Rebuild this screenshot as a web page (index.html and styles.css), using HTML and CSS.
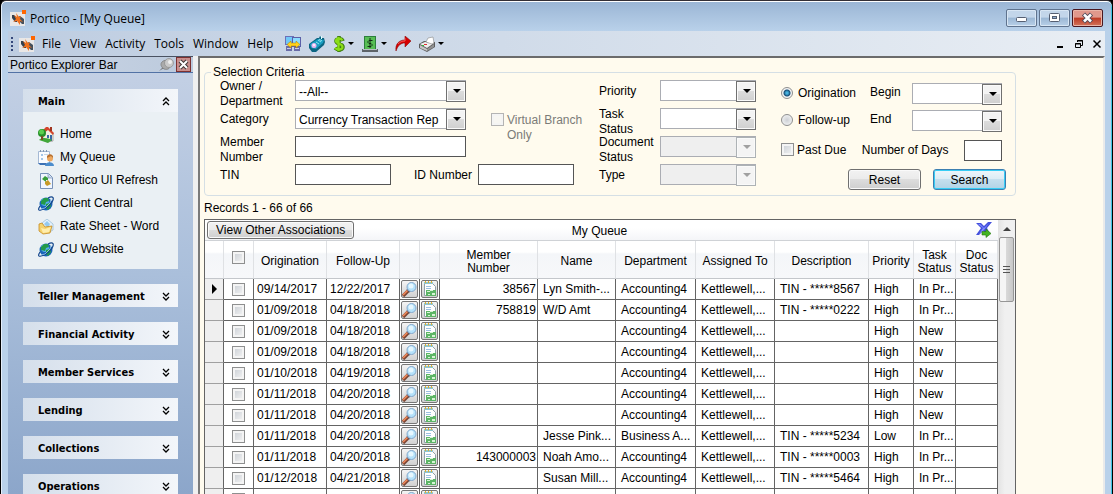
FILE: index.html
```html
<!DOCTYPE html>
<html lang="en">
<head>
	<meta charset="utf-8">
	<title>Portico - [My Queue]</title>
	<link rel="stylesheet" href="styles.css">
</head>
<body>
	<svg class="sprite" aria-hidden="true">
		<symbol id="logo" viewBox="0 0 16 16">
			<path d="M0 2h12v2h3v12H0z" fill="#e9e7e6"/>
			<path d="M12 0h4v4h-4z" fill="#f60"/>
			<path d="M2 5h2l3 3v4H5L2 8z" fill="#35414f"/>
			<path d="M8 7l2-1 4 3v5h-2l-3-3z" fill="#45505c"/>
			<path d="M6 3l3 4 2-1-1 3 3 3-3-1v4l-3-4-4 1 3-3-2-4 3 2z" fill="#f0701c"/>
		</symbol>
		<symbol id="computers" viewBox="0 0 16 16">
			<path d="M0 0h9v9H0z" fill="#6b70b8"/><path d="M1 1h7v7H1z" fill="#71c8f8"/>
			<path d="M7 1h9v10H7z" fill="#5b60a8"/><path d="M8 2h7v8H8z" fill="#8bdcff"/>
			<path d="M1 10h6v5H1zM9 11h6v4H9z" fill="#686ca8"/><path d="M2 12h4v1H2zM10 12h4v1h-4z" fill="#c9cbe8"/>
			<path d="M2 8.500L6 5v2h5V5l4 3.500-4 3.500v-2H6v2z" fill="#ffd21c" stroke="#a77a00" stroke-width=".5"/>
		</symbol>
		<symbol id="phone" viewBox="0 0 16 16">
			<path d="M0 8l8-6h2l1-2 2 2h2l1 4-1 3-8 7H3l-3-4z" fill="#0c6582"/>
			<path d="M1 8l8-5 6 1-1 3-7 6-5-1z" fill="#189dc0"/>
			<path d="M9 4l3 2M7 6l3 2M10 3l3 2" stroke="#8be4f4"/>
			<circle cx="5" cy="9.500" r="2.500" fill="#eab6f0"/><circle cx="5" cy="9" r="1" fill="#fff"/>
			<path d="M12 0h1v3h-1z" fill="#dff"/>
		</symbol>
		<symbol id="dollar" viewBox="0 0 12 16">
			<path d="M6 0v16M10 5C9 2 3 2 3 5c0 4 7 2 7 6 0 4-6 3-8 1" fill="none" stroke="#3f7d12" stroke-width="3.600"/>
			<path d="M5.500 1v14M9.500 4.500C8 2 3 2 3 5c0 3 6.500 2 6.500 6 0 3-5.500 3-7.500 1" fill="none" stroke="#8add16" stroke-width="2.200"/>
		</symbol>
		<symbol id="cash" viewBox="0 0 16 16">
			<path d="M2 0h12v14H2z" fill="#2c7f3c"/><path d="M3 1h10v12H3z" fill="#57bd55"/>
			<path d="M8 2v10M10.500 4.500H7L6 5.500v1l1 1h2l1 1v1l-1 1H5.500" fill="none" stroke="#102a14"/>
			<path d="M0 13h16v3H0z" fill="#5d6368"/><path d="M1 13h14v1H1z" fill="#b7bfc4"/>
		</symbol>
		<symbol id="forward" viewBox="0 0 16 16">
			<path d="M1 15C0 8 4 4 10 4V0l6 5-6 6V7C6 7 3 9 1 15z" fill="#d60000" stroke="#8c1010" stroke-width=".6"/>
			<path d="M3 8c2-2 4-3 7-3V2" fill="none" stroke="#ff6b6b" stroke-width=".8"/>
		</symbol>
		<symbol id="printer" viewBox="0 0 16 16">
			<path d="M0 8l5-3 11 1v5l-8 5-8-4z" fill="#5d5d5d"/>
			<path d="M1 8l5-2 9 1-7 5z" fill="#eee"/><path d="M1 9l7 4v2l-7-3z" fill="#c4c4c4"/><path d="M8 13l7-5v3l-7 4z" fill="#929292"/>
			<path d="M7 6l2-4 5-1 1 6-2 1z" fill="#fff" stroke="#888" stroke-width=".6"/>
			<path d="M5 8h3v1H5z" fill="#e03030"/><path d="M3 9h2v1H3z" fill="#36b53c"/>
		</symbol>
		<symbol id="pin" viewBox="0 0 16 14">
			<path d="M0 13l5-5 2 1z" fill="#777"/>
			<path d="M3 4c2-2 4-2 5-1l3 5c0 3-3 4-6 3-3-2-4-5-2-7z" fill="#aaa" stroke="#777" stroke-width=".7"/>
			<circle cx="10" cy="5" r="4.500" fill="#c9c9c9" stroke="#8d8d8d" stroke-width=".7"/><circle cx="11" cy="4" r="2" fill="#eee"/>
		</symbol>
		<symbol id="home" viewBox="0 0 16 16">
			<path d="M5 6l5-5 5 5v8l-6 1-4-2z" fill="#f3eee0" stroke="#84807b" stroke-width=".6"/>
			<path d="M5 3l3-3h2l6 6-1 2-5-5-4 3z" fill="#d4452c"/><path d="M12 0h2v4h-2z" fill="#a0341f"/>
			<path d="M9 8h2v3H9zM12 8h2v6h-2z" fill="#3767a5"/>
			<path d="M1 13c3-3 9-2 13 0l-4 3z" fill="#42a83a"/>
			<circle cx="4" cy="6" r="4" fill="#27902a"/><circle cx="3.500" cy="5" r="2.500" fill="#5cce4d"/>
			<path d="M3 9h2v4H3z" fill="#7d4f24"/>
		</symbol>
		<symbol id="queue" viewBox="0 0 16 16">
			<path d="M.500 1.500h11v12H.500z" fill="#fafcff" stroke="#a5b9d4"/>
			<path d="M2 0h1v2H2zM5 0h1v2H5zM8 0h1v2H8z" fill="#7f97b4"/>
			<path d="M3 4h2v2H3zM3 8h2v2H3z" fill="#a4c6e8"/><path d="M6 4h4v1H6z" fill="#c4d6e8"/>
			<path d="M0 13h8v2H2z" fill="#3c70b4"/>
			<path d="M7 16c0-5 9-5 9 0z" fill="#4b8ccc"/><circle cx="12" cy="8.500" r="3" fill="#eda860"/><path d="M9 8c-1-5 7-5 6 0l-2-2z" fill="#b8702f"/>
		</symbol>
		<symbol id="refresh" viewBox="0 0 16 16">
			<path d="M2.500.500h8l4 4v11h-12z" fill="#f0f6ff" stroke="#7892b8"/><path d="M10 1v4h4" fill="#c3d3e8" stroke="#7892b8" stroke-width=".7"/>
			<path d="M4 6l3-3 3 2v2H8v2z" fill="#389c3a"/><path d="M7 9l3-2 3 4-4 2-2-2z" fill="#c79a28"/>
		</symbol>
		<symbol id="globe" viewBox="0 0 16 16">
			<circle cx="8" cy="8" r="6.500" fill="#1864b8"/><circle cx="7" cy="6" r="4" fill="#54acec"/>
			<path d="M3 5l3-3h4l1 3-3 1-1 3-4-1zM8 8l4-1 1 3-3 4-2-2z" fill="#239a48"/>
			<path d="M10 2c4-2 6-1 5 2-1 4-7 9-12 10-3 1-3-1-1-4" fill="none" stroke="#14478d" stroke-width="1.200"/>
			<path d="M13 3l-1 4-5 5-4 1" fill="none" stroke="#b8e3ff" stroke-width=".7"/>
		</symbol>
		<symbol id="folder" viewBox="0 0 16 16">
			<path d="M4 4l5-4 6 5v6l-5 3z" fill="#e1f1fd" stroke="#94b7d2" stroke-width=".7"/>
			<path d="M6 5l3-3 3 3-2 4z" fill="#94c9ee"/>
			<path d="M1 5l3-1 3 4 7-1-2 7-7 1-4-3z" fill="#f5d26c" stroke="#c58b25" stroke-width=".8"/>
			<path d="M3 9l4 1 6-2-2 5-6 1z" fill="#ffedac"/>
		</symbol>
		<symbol id="chevron" viewBox="0 0 8 9">
			<path d="M1 1l3 3 3-3M1 5l3 3 3-3" fill="none" stroke="#000" stroke-width="1.300"/>
		</symbol>
		<symbol id="magnifier" viewBox="0 0 15 16">
			<path d="M1 15l6-6" stroke="#7d4634" stroke-width="3.400"/><path d="M1 14l5-5" stroke="#f1895a" stroke-width="1.600"/>
			<path d="M5 8l3 3" stroke="#555e74" stroke-width="1.500"/>
			<circle cx="9.500" cy="6" r="4.500" fill="#b5e2fb" stroke="#85a8cb"/><circle cx="9" cy="5" r="2.500" fill="#e6f7ff"/>
		</symbol>
		<symbol id="sheet" viewBox="0 0 15 16">
			<path d="M2.500 2.500h8l3 3v9h-11z" fill="#fff" stroke="#90a0a8"/>
			<path d="M2 1h9v2H2z" fill="#8fc4cf"/><path d="M3 0h1v2H3zM6 0h1v2H6zM9 0h1v2H9z" fill="#e0b030"/>
			<path d="M4 5.500h5M4 7.500h5" stroke="#9bbfe0"/>
			<path d="M4 9h10v6H4z" fill="#5db566"/><path d="M5 10h3v1H5zM10 12h3v2h-3zM6 13h2v1H6zM8 9h3v1H8z" fill="#d7f4d5"/>
		</symbol>
		<symbol id="export" viewBox="0 0 16 16">
			<path d="M0 1h5l3 3 4-4h4l-5 6 3 6h-4l-3-3-4 4H0l5-7z" fill="#4450dc"/><path d="M2 2h2l4 4 5-5-5 7-5 4 4-6z" fill="#7f8bff"/>
			<path d="M6 9.500h4V7l5 4.500-5 4V13H6z" fill="#44b322" stroke="#26760f" stroke-width=".6"/>
		</symbol>
	</svg>

	<div class="window">
		<header class="titlebar">
			<svg class="icon"><use href="#logo"/></svg>
			<h1>Portico - [My Queue]</h1>
			<div class="caption-buttons">
				<button type="button" aria-label="Minimize"><svg viewBox="0 0 29 16"><rect x="9.500" y="7.500" width="10" height="4" rx="1" fill="#fff" stroke="#555f72"/></svg></button>
				<button type="button" aria-label="Restore"><svg viewBox="0 0 29 16"><rect x="9.500" y="3.500" width="10" height="8" rx="1" fill="#fff" stroke="#555f72"/><rect x="12.500" y="6.500" width="4" height="2" fill="#8faed0" stroke="#555f72"/></svg></button>
				<button type="button" class="close" aria-label="Close"><svg viewBox="0 0 29 16"><path d="M10.500 4l8 8M18.500 4l-8 8" stroke="#514a58" stroke-width="4.500"/><path d="M11 4.500l7 7M18 4.500l-7 7" stroke="#fff" stroke-width="2.500"/></svg></button>
			</div>
		</header>

		<nav class="menubar">
			<span class="grip"></span>
			<svg class="icon menu-logo"><use href="#logo"/></svg>
			<div class="menus">
				<a href="#">File</a>
				<a href="#">View</a>
				<a href="#">Activity</a>
				<a href="#">Tools</a>
				<a href="#">Window</a>
				<a href="#">Help</a>
			</div>
			<div class="tools">
				<button type="button" aria-label="Connect"><svg class="icon"><use href="#computers"/></svg></button>
				<button type="button" aria-label="Phone"><svg class="icon"><use href="#phone"/></svg></button>
				<button type="button" class="drop" aria-label="Money"><svg class="icon narrow"><use href="#dollar"/></svg></button>
				<button type="button" class="drop" aria-label="Cash"><svg class="icon"><use href="#cash"/></svg></button>
				<button type="button" aria-label="Forward"><svg class="icon"><use href="#forward"/></svg></button>
				<button type="button" class="drop" aria-label="Print"><svg class="icon"><use href="#printer"/></svg></button>
			</div>
			<div class="mdi-buttons">
				<button type="button" aria-label="Minimize queue"><svg viewBox="0 0 10 10"><path d="M1 8h6" stroke="#000" stroke-width="2"/></svg></button>
				<button type="button" aria-label="Restore queue"><svg viewBox="0 0 10 10"><path d="M3.500 3V1.500h5v5H7M3 2h6M1.500 4.500h5v4h-5zM1 5h6" fill="none" stroke="#000"/></svg></button>
				<button type="button" aria-label="Close queue"><svg viewBox="0 0 10 10"><path d="M1.500 1.500l7 7M8.500 1.500l-7 7" stroke="#000" stroke-width="1.500"/></svg></button>
			</div>
		</nav>

		<div class="workspace">
			<aside class="sidebar">
				<div class="sidebar-title">
					<h2>Portico Explorer Bar</h2>
					<svg class="pin"><use href="#pin"/></svg>
					<button type="button" aria-label="Close explorer bar"><svg viewBox="0 0 13 13"><path d="M3 3l7 7M10 3l-7 7" stroke="#403838" stroke-width="4"/><path d="M3 3l7 7M10 3l-7 7" stroke="#fff" stroke-width="2"/></svg></button>
				</div>
				<section class="group">
					<h3>Main <svg class="chevron up"><use href="#chevron"/></svg></h3>
					<ul>
						<li><a href="#"><svg class="icon"><use href="#home"/></svg>Home</a></li>
						<li><a href="#"><svg class="icon"><use href="#queue"/></svg>My Queue</a></li>
						<li><a href="#"><svg class="icon"><use href="#refresh"/></svg>Portico UI Refresh</a></li>
						<li><a href="#"><svg class="icon"><use href="#globe"/></svg>Client Central</a></li>
						<li><a href="#"><svg class="icon"><use href="#folder"/></svg>Rate Sheet - Word</a></li>
						<li><a href="#"><svg class="icon"><use href="#globe"/></svg>CU Website</a></li>
					</ul>
				</section>
				<section class="group"><h3>Teller Management <svg class="chevron"><use href="#chevron"/></svg></h3></section>
				<section class="group"><h3>Financial Activity <svg class="chevron"><use href="#chevron"/></svg></h3></section>
				<section class="group"><h3>Member Services <svg class="chevron"><use href="#chevron"/></svg></h3></section>
				<section class="group"><h3>Lending <svg class="chevron"><use href="#chevron"/></svg></h3></section>
				<section class="group"><h3>Collections <svg class="chevron"><use href="#chevron"/></svg></h3></section>
				<section class="group"><h3>Operations <svg class="chevron"><use href="#chevron"/></svg></h3></section>
			</aside>

			<main class="content">
				<form>
					<fieldset>
						<legend>Selection Criteria</legend>
						<div class="criteria">
							<div class="fields owner-fields">
								<label class="two-line" for="owner">Owner / Department</label>
								<div class="combo wide"><select id="owner"><option>--All--</option></select></div>
								<label for="category">Category</label>
								<div class="field-row">
									<div class="combo wide"><select id="category"><option>Currency Transaction Rep</option></select></div>
									<label class="check disabled"><input type="checkbox" disabled>Virtual Branch Only</label>
								</div>
								<label class="two-line" for="member">Member Number</label>
								<input class="wide" type="text" id="member">
								<label for="tin">TIN</label>
								<div class="field-row">
									<input type="text" id="tin">
									<label class="id-label" for="idnumber">ID Number</label>
									<input type="text" id="idnumber">
								</div>
							</div>

							<div class="fields status-fields">
								<label for="priority">Priority</label>
								<div class="combo"><select id="priority"></select></div>
								<label class="two-line" for="task">Task<br>Status</label>
								<div class="combo"><select id="task"></select></div>
								<label class="two-line" for="document">Document Status</label>
								<div class="combo off"><select id="document" disabled></select></div>
								<label for="type">Type</label>
								<div class="combo off"><select id="type" disabled></select></div>
							</div>

							<div class="dates">
								<div class="date-row">
									<label class="check"><input type="radio" name="date" checked>Origination</label>
									<label for="begin">Begin</label>
									<div class="combo"><select id="begin"></select></div>
								</div>
								<div class="date-row">
									<label class="check"><input type="radio" name="date">Follow-up</label>
									<label for="end">End</label>
									<div class="combo"><select id="end"></select></div>
								</div>
								<div class="due-row">
									<label class="check"><input type="checkbox">Past Due</label>
									<label for="days">Number of Days</label>
									<input type="text" id="days">
								</div>
								<div class="actions">
									<button type="reset" class="btn">Reset</button>
									<button type="button" class="btn default">Search</button>
								</div>
							</div>
						</div>
					</fieldset>
				</form>

				<p class="records">Records 1 - 66 of 66</p>

				<div class="grid-panel">
					<div class="grid-main">
						<div class="grid-toolbar">
							<button type="button" class="btn">View Other Associations</button>
							<h2>My Queue</h2>
							<button type="button" class="export" aria-label="Export"><svg class="icon"><use href="#export"/></svg></button>
						</div>
						<table>
							<colgroup>
								<col class="c-marker"><col class="c-check"><col class="c-date"><col class="c-date">
								<col class="c-icon"><col class="c-icon"><col class="c-member"><col class="c-name">
								<col class="c-dept"><col class="c-assigned"><col><col class="c-priority">
								<col class="c-status"><col class="c-status">
							</colgroup>
							<thead>
								<tr>
									<th></th>
									<th><input type="checkbox" class="select-all" aria-label="Select all"></th>
									<th>Origination</th>
									<th>Follow-Up</th>
									<th></th>
									<th></th>
									<th>Member<br>Number</th>
									<th>Name</th>
									<th>Department</th>
									<th>Assigned To</th>
									<th>Description</th>
									<th>Priority</th>
									<th>Task<br>Status</th>
									<th>Doc<br>Status</th>
								</tr>
							</thead>
							<tbody id="rows"></tbody>
						</table>
					</div>
					<div class="scrollbar">
						<span class="scroll-up"></span>
						<span class="thumb"></span>
					</div>
				</div>
			</main>
		</div>
	</div>

	<script>
		const tasks = [
			['09/14/2017', '12/22/2017', '38567', 'Lyn Smith-...', 'Accounting4', 'TIN - *****8567', 'High', 'In Pr...'],
			['01/09/2018', '04/18/2018', '758819', 'W/D Amt', 'Accounting4', 'TIN - *****0222', 'High', 'In Pr...'],
			['01/09/2018', '04/18/2018', '', '', 'Accounting4', '', 'High', 'New'],
			['01/09/2018', '04/18/2018', '', '', 'Accounting4', '', 'High', 'New'],
			['01/10/2018', '04/19/2018', '', '', 'Accounting4', '', 'High', 'New'],
			['01/11/2018', '04/20/2018', '', '', 'Accounting4', '', 'High', 'New'],
			['01/11/2018', '04/20/2018', '', '', 'Accounting4', '', 'High', 'New'],
			['01/11/2018', '04/20/2018', '', 'Jesse Pink...', 'Business A...', 'TIN - *****5234', 'Low', 'In Pr...'],
			['01/11/2018', '04/20/2018', '143000003', 'Noah Amo...', 'Accounting4', 'TIN - *****0003', 'High', 'In Pr...'],
			['01/12/2018', '04/21/2018', '', 'Susan Mill...', 'Accounting4', 'TIN - *****5464', 'High', 'In Pr...'],
			['', '', '', '', '', '', '', '']
		];

		document.getElementById('rows').innerHTML = tasks.map(([orig, follow, member, name, dept, desc, priority, status], i) => `
			<tr>
				<td class="marker">${i === 0 ? '<span class="current"></span>' : ''}</td>
				<td class="center"><input type="checkbox" aria-label="Select row ${i + 1}"></td>
				<td class="date">${orig}</td>
				<td class="date">${follow}</td>
				<td class="tool"><button type="button" aria-label="View"><svg><use href="#magnifier"/></svg></button></td>
				<td class="tool"><button type="button" aria-label="Report"><svg><use href="#sheet"/></svg></button></td>
				<td class="number">${member}</td>
				<td>${name}</td>
				<td>${dept}</td>
				<td>${dept ? 'Kettlewell,...' : ''}</td>
				<td>${desc}</td>
				<td>${priority}</td>
				<td>${status}</td>
				<td></td>
			</tr>`).join('');
	</script>
</body>
</html>
```
FILE: styles.css
```css
* {
	box-sizing: border-box;
}

body {
	margin: 0;
	font-family: "Liberation Sans", Arial, sans-serif;
	font-size: 12px;
	line-height: 15px;
	color: #000;
	background: #000;
}

h1, h2, h3, p, ul {
	margin: 0;
	padding: 0;
	font-size: 12px;
	font-weight: normal;
}

a {
	color: inherit;
	text-decoration: none;
}

button, input, select {
	margin: 0;
	padding: 0;
	font: inherit;
	color: inherit;
}

button {
	border: 0;
	background: none;
}

svg {
	display: block;
}

.sprite {
	display: none;
}

.icon {
	flex: none;
	width: 16px;
	height: 16px;
}

.icon.narrow {
	width: 12px;
}

/* window frame */
.window {
	display: flex;
	flex-direction: column;
	height: 100vh;
	overflow: hidden;
	border-top: 1px solid #332f35;
	border-left: 1px solid #000;
	border-right: 1px solid #000;
	border-radius: 6px 6px 0 0;
	padding: 0 7px;
	background: linear-gradient(#9ab5d4, #b9d1ea 30px, #b9d1ea);
	box-shadow: inset 0 1px #fff, inset -1px 0 #3fc4e4, inset 1px 0 #e4eefa;
}

.titlebar {
	display: flex;
	flex: none;
	align-items: center;
	height: 30px;
	padding: 4px 2px 0;
}

.titlebar h1 {
	flex: 1;
	margin-left: 4px;
}

.titlebar h1, .menus {
	font-family: "Open Sans", "Noto Sans", sans-serif;
	font-size: 12px;
}

.caption-buttons {
	display: flex;
	gap: 2px;
}

.caption-buttons button {
	width: 31px;
	height: 18px;
	border: 1px solid #5f738e;
	border-radius: 2px;
	background: linear-gradient(#c3d6ea 45%, #9bb7d4 50%, #b8d0e8);
	box-shadow: inset 0 0 0 1px #d8e6f4;
}

.caption-buttons .close {
	border-color: #4a1720;
	background: linear-gradient(#e0988c 45%, #bd3a24 50%, #d3745b);
	box-shadow: inset 0 0 0 1px #eab5a8;
}

/* menu bar */
.menubar {
	display: flex;
	flex: none;
	align-items: center;
	height: 25px;
	padding-left: 3px;
	background: linear-gradient(90deg, #becde1, #d0dbe9 45%, #e9eef4);
}

.grip {
	width: 2px;
	height: 14px;
	background: repeating-linear-gradient(#34477a 0 2px, transparent 2px 4px);
}

.menu-logo {
	margin: 0 7px 0 6px;
}

.menus {
	display: flex;
	gap: 9px;
}

.tools {
	display: flex;
	align-items: center;
	gap: 8px;
	margin-left: 12px;
}

.tools button {
	display: flex;
	align-items: center;
}

.drop::after {
	content: "";
	margin-left: 3px;
	border: 3px solid transparent;
	border-top-color: #000;
	border-bottom: 0;
}

.mdi-buttons {
	display: flex;
	gap: 8px;
	margin-left: auto;
	padding-right: 3px;
}

.mdi-buttons svg {
	width: 10px;
	height: 10px;
}

.workspace {
	display: flex;
	flex: 1;
	min-height: 0;
	background: #f0f0f0;
}

/* explorer bar */
.sidebar {
	flex: none;
	width: 185px;
	overflow: hidden;
	background: linear-gradient(#c5d1e5, #aabfdb 50%, #8ca6ca);
}

.sidebar-title {
	display: flex;
	align-items: center;
	height: 17px;
	margin-bottom: 16px;
	padding: 0 2px;
	border-top: 1px solid #4a5262;
	border-bottom: 1px solid #5272a5;
	background: linear-gradient(90deg, #cbd6e5, #bccadd);
}

.sidebar-title h2 {
	flex: 1;
	padding-top: 1px;
}

.pin {
	width: 16px;
	height: 14px;
}

.sidebar-title button {
	width: 15px;
	height: 15px;
	margin-left: 1px;
	border: 1px solid #7c3030;
	background: #c98e8c;
}

.group {
	margin: 0 15px 15px;
	background: #eaf0f4;
}

.group h3 {
	display: flex;
	align-items: center;
	justify-content: space-between;
	height: 23px;
	padding: 1px 8px 0 15px;
	font: bold 11px "DejaVu Sans Condensed", "Open Sans", sans-serif;
	background: linear-gradient(90deg, #d5dfeb, #f3f6fa);
}

.chevron {
	width: 8px;
	height: 9px;
}

.chevron.up {
	transform: rotate(180deg);
}

.group ul {
	padding: 11px 0 8px 15px;
	list-style: none;
}

.group li a {
	display: flex;
	align-items: center;
	gap: 6px;
	height: 23px;
}

/* queue page */
.content {
	display: flex;
	flex: 1;
	flex-direction: column;
	min-width: 0;
	margin-left: 5px;
	padding: 7px 87px 0 4px;
	overflow: hidden;
	border-top: 2px solid #6b6b6b;
	border-left: 2px solid #7a7a7a;
	border-right: 2px solid #eaeaea;
	background: #fffbee;
}

fieldset {
	min-width: 0;
	height: 131px;
	margin: 0;
	padding: 0 9px 0 15px;
	border: 1px solid #d5dfe5;
	border-radius: 4px;
}

legend {
	margin-left: -9px;
	padding: 0 2px;
}

.criteria {
	display: flex;
	justify-content: space-between;
}

.fields {
	display: grid;
	grid-auto-rows: 28px;
	align-items: start;
}

.fields > label {
	padding-top: 4px;
}

.fields > .two-line {
	margin-top: -1px;
	padding-top: 0;
}

.owner-fields {
	grid-template-columns: 75px 279px;
}

.status-fields {
	grid-template-columns: 61px 96px;
}

.field-row {
	display: flex;
	align-items: flex-start;
}

input[type="text"] {
	width: 96px;
	height: 21px;
	border: 1px solid #555;
	background: #fff;
}

.wide, input[type="text"].wide {
	flex: none;
	width: 171px;
}

.id-label {
	flex: 1;
	padding: 4px 6px 0 0;
	text-align: right;
}

.check {
	display: flex;
	gap: 3px;
}

.check.disabled {
	flex: none;
	width: 110px;
	margin: 5px 0 0 25px;
	color: #7b7b78;
}

input[type="checkbox"] {
	flex: none;
	appearance: none;
	width: 13px;
	height: 13px;
	border: 1px solid #8e8f8f;
	background: linear-gradient(135deg, #c8cdd3, #f6f6f6);
	box-shadow: inset 0 0 0 2px #f4f4f4;
}

input[type="checkbox"]:disabled {
	border-color: #b4b4b4;
	background: #f7f6f2;
}

input[type="radio"] {
	flex: none;
	appearance: none;
	width: 12px;
	height: 12px;
	margin: 1px 2px 0 0;
	border: 1px solid #8e8f8f;
	border-radius: 50%;
	background: radial-gradient(#cdd0d5, #fafafa);
}

input[type="radio"]:checked {
	background: radial-gradient(#45b2df 0 1px, #174f78 3px, #f4f4f4 4px);
}

.combo {
	position: relative;
	height: 21px;
}

.combo select {
	display: block;
	appearance: none;
	width: 100%;
	height: 21px;
	padding: 3px 20px 0 3px;
	border: 1px solid #abadb3;
	border-radius: 0;
	background: #fff;
}

/* arrow button drawn over the select */
.combo::before {
	content: "";
	position: absolute;
	top: 1px;
	right: 0;
	width: 18px;
	height: 19px;
	border: 1px solid #707070;
	background: linear-gradient(#f3f3f3 45%, #dcdcdc 50%, #cfcfcf);
	box-shadow: inset 0 0 0 1px #fafafa;
	pointer-events: none;
}

.combo::after {
	content: "";
	position: absolute;
	top: 9px;
	right: 5px;
	border: 4px solid transparent;
	border-top-color: #000;
	border-bottom: 0;
	pointer-events: none;
}

.combo.off select {
	background: #efefef;
	opacity: 1;
}

.combo.off::before {
	border-color: #adb2b5;
	background: #f4f4f4;
}

.combo.off::after {
	border-top-color: #a0a0a0;
}

.dates {
	width: 225px;
	padding-top: 3px;
}

.date-row {
	display: grid;
	grid-template-columns: 89px 42px 90px;
	height: 27px;
}

.date-row label {
	padding-top: 2px;
}

.date-row .check {
	padding-top: 3px;
}

.due-row {
	display: flex;
	justify-content: space-between;
	align-items: center;
	width: 221px;
	height: 27px;
}

.due-row input[type="text"] {
	width: 38px;
}

.actions {
	display: flex;
	justify-content: flex-end;
	gap: 12px;
	margin-top: 5px;
}

.btn {
	height: 21px;
	border: 1px solid #707070;
	border-radius: 3px;
	background: linear-gradient(#f2f2f2, #ebebeb 48%, #dddddd 50%, #cfcfcf);
	box-shadow: inset 0 0 0 1px #fafafa;
}

.actions .btn {
	width: 73px;
	padding-top: 2px;
}

.btn.default {
	border-color: #3c7fb1;
	background: linear-gradient(#eef6fb, #dcecf5 48%, #c5dfee 50%, #b2d3e6);
	box-shadow: inset 0 0 0 1px #38cdf5;
}

.records {
	margin: 5px 0 3px;
}

/* results grid */
.grid-panel {
	display: flex;
	flex: 1;
	min-height: 0;
	overflow: hidden;
	border: 1px solid #646464;
	border-bottom: 0;
	background: #fff;
}

.grid-main {
	flex: 1;
	min-width: 0;
}

.grid-toolbar {
	display: grid;
	grid-template-columns: 1fr auto 1fr;
	align-items: center;
	height: 21px;
	padding: 0 6px 0 2px;
	border-bottom: 1px solid #cfd2d6;
	background: linear-gradient(#fff 40%, #f4f5f8);
}

.grid-toolbar h2 {
	padding-top: 2px;
}

.grid-toolbar .btn {
	justify-self: start;
	height: 18px;
	padding: 0 8px;
}

.export {
	justify-self: end;
}

table {
	width: 100%;
	table-layout: fixed;
	border-collapse: separate;
	border-spacing: 0;
}

.c-marker { width: 19px; }
.c-check { width: 30px; }
.c-date { width: 73px; }
.c-icon { width: 20px; }
.c-member { width: 98px; }
.c-name { width: 78px; }
.c-dept { width: 80px; }
.c-assigned { width: 79px; }
.c-priority { width: 45px; }
.c-status { width: 42px; }

th {
	height: 38px;
	padding: 4px 0 0;
	border-right: 1px solid #dfe1e4;
	border-bottom: 1px solid #c4c7cb;
	font-weight: normal;
	line-height: 13px;
	white-space: nowrap;
	background: linear-gradient(#fff 30%, #f4f6f9 35%, #f7f8fa);
}

th input {
	display: block;
	margin: -8px auto 0;
}

td {
	height: 21px;
	padding: 0 5px;
	border-right: 1px solid #646464;
	border-bottom: 1px solid #646464;
	white-space: nowrap;
	overflow: hidden;
}

td.marker {
	border-bottom-color: #a0a0a0;
	background: #efefef;
}

.current {
	display: block;
	width: 0;
	margin-left: 2px;
	border: 5px solid transparent;
	border-left-color: #000;
	border-right: 0;
}

td.center {
	padding: 0 8px;
}

td.center input {
	display: block;
}

td.date {
	padding: 0 3px;
}

td.number {
	padding-right: 1px;
	text-align: right;
}

td.tool {
	padding: 0 1px;
}

.tool button {
	display: block;
	width: 17px;
	height: 18px;
	border: 1px solid #777;
	border-radius: 2px;
	background: linear-gradient(#f4f4f4, #d2d2d2);
}

.tool svg {
	width: 15px;
	height: 16px;
}

.scrollbar {
	display: flex;
	flex: none;
	flex-direction: column;
	align-items: center;
	width: 17px;
	background: linear-gradient(90deg, #e3e3e3, #f0f0f0 40%);
}

.scroll-up {
	margin: 7px 0 6px;
	border: 4px solid transparent;
	border-top: 0;
	border-bottom: 4px solid #404040;
}

.thumb {
	width: 15px;
	height: 65px;
	border: 1px solid #969696;
	border-radius: 2px;
	background:
		repeating-linear-gradient(#555 0 1px, transparent 1px 3px) center / 7px 8px no-repeat,
		linear-gradient(90deg, #f5f5f5 45%, #d8d8d8 50%, #c8c8c8);
}
```
